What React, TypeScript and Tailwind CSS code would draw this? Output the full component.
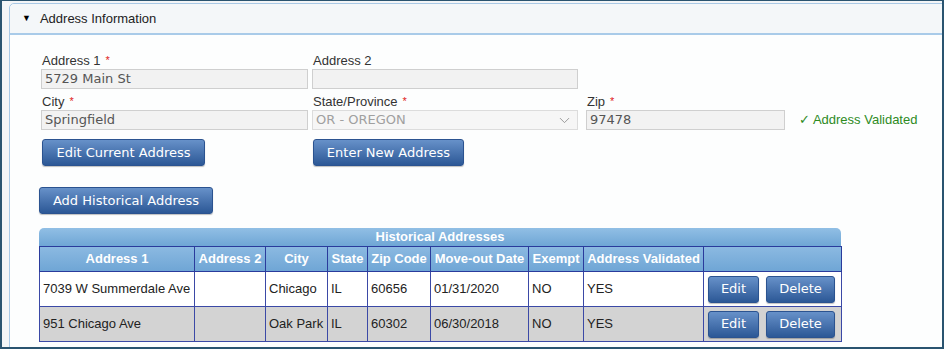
import { ChevronDown } from "lucide-react";

type HistRow = {
  address1: string;
  address2: string;
  city: string;
  state: string;
  zip: string;
  moveOut: string;
  exempt: string;
  validated: string;
};

const rows: HistRow[] = [
  { address1: "7039 W Summerdale Ave", address2: "", city: "Chicago", state: "IL", zip: "60656", moveOut: "01/31/2020", exempt: "NO", validated: "YES" },
  { address1: "951 Chicago Ave", address2: "", city: "Oak Park", state: "IL", zip: "60302", moveOut: "06/30/2018", exempt: "NO", validated: "YES" },
];

const columns = [
  { label: "Address 1", w: 155 },
  { label: "Address 2", w: 71 },
  { label: "City", w: 62 },
  { label: "State", w: 40 },
  { label: "Zip Code", w: 63 },
  { label: "Move-out Date", w: 98 },
  { label: "Exempt", w: 55 },
  { label: "Address Validated", w: 120 },
  { label: "", w: 138 },
];

const btn =
  "h-[27px] rounded-[3px] border border-[#2b5390] bg-gradient-to-b from-[#6791c9] to-[#2c5896] text-white text-[13px] font-['DejaVu_Sans',sans-serif] shadow-[0_1px_1px_rgba(0,0,0,0.25)]";

function Label({ text, required }: { text: string; required?: boolean }) {
  return (
    <div className="h-[17px] text-[13px] leading-[17px] text-[#333] pl-[1px]">
      {text}
      {required && <span className="text-[#e0201b] text-[11px] align-top ml-[5px]">*</span>}
    </div>
  );
}

function Input({ value, width, muted }: { value: string; width: number; muted?: boolean }) {
  return (
    <div
      className={`h-[20px] border border-[#cfcfcf] bg-[#f2f2f2] px-[3px] text-[13px] leading-[18px] font-['DejaVu_Sans',sans-serif] ${
        muted ? "text-[#9a9a9a]" : "text-[#555]"
      }`}
      style={{ width }}
    >
      {value}
    </div>
  );
}

export default function App() {
  return (
    <div className="w-[944px] h-[349px] overflow-hidden border-x-2 border-b-2 border-t border-[#2a5470] bg-[#f3f5f7] pt-[2px] pl-[7px] font-['Liberation_Sans',Arial,sans-serif]">
      <div className="w-[960px] h-[400px] border border-[#a9c9e6] rounded-tl-[5px] bg-[#fdfefe]">
        <div className="h-[31px] flex items-center pl-[12px] bg-[#f4f7f9] border-b-2 border-[#a9cbe9] rounded-tl-[5px]">
          <span className="text-[9px] text-black mr-[9px]">▼</span>
          <span className="text-[13px] text-[#222]">Address Information</span>
        </div>

        <div className="pt-[17px] pl-[31px]">
          <div className="flex">
            <div className="w-[271px]">
              <Label text="Address 1" required />
              <Input value="5729 Main St" width={267} />
            </div>
            <div className="w-[274px]">
              <Label text="Address 2" />
              <Input value="" width={266} />
            </div>
          </div>

          <div className="flex mt-[4px]">
            <div className="w-[271px]">
              <Label text="City" required />
              <Input value="Springfield" width={267} />
            </div>
            <div className="w-[274px]">
              <Label text="State/Province" required />
              <div className="h-[20px] w-[266px] border border-[#dcdcdc] bg-[#f6f6f6] px-[3px] flex items-center justify-between text-[13px] text-[#a0a0a0] font-['DejaVu_Sans',sans-serif]">
                <span>OR - OREGON</span>
                <ChevronDown size={17} strokeWidth={1.2} className="text-[#8a8a8a] mr-[1px]" />
              </div>
            </div>
            <div>
              <Label text="Zip" required />
              <div className="flex items-center">
                <Input value="97478" width={199} />
                <span className="ml-[14px] text-[13px] text-[#2e8b1f]">✓ Address Validated</span>
              </div>
            </div>
          </div>

          <div className="flex mt-[9px] ml-[1px]">
            <button className={`${btn} w-[163px]`}>Edit Current Address</button>
            <button className={`${btn} w-[151px] ml-[108px]`}>Enter New Address</button>
          </div>

          <button className={`${btn} w-[174px] h-[26px] mt-[21px] -ml-[2px] block`}>Add Historical Address</button>

          <div className="mt-[14px] -ml-[2px] w-[802px]">
            <div className="h-[18px] rounded-t-[5px] bg-gradient-to-b from-[#91bfe5] to-[#6fa6d5] text-center text-white font-bold text-[13px] leading-[18px]">
              Historical Addresses
            </div>
            <table className="w-[802px] table-fixed border-collapse text-[13px]">
              <colgroup>
                {columns.map((c, i) => (
                  <col key={i} style={{ width: c.w }} />
                ))}
              </colgroup>
              <thead>
                <tr className="h-[25px] bg-gradient-to-b from-[#8bb9e1] to-[#6ea5d5]">
                  {columns.map((c, i) => (
                    <th key={i} className="border border-[#2a3b9c] text-white font-bold text-[13px] text-center p-0 whitespace-nowrap">
                      {c.label}
                    </th>
                  ))}
                </tr>
              </thead>
              <tbody>
                {rows.map((r, i) => (
                  <tr key={i} className={`h-[35px] ${i % 2 ? "bg-[#d3d3d3]" : "bg-white"} text-[#222]`}>
                    {[r.address1, r.address2, r.city, r.state, r.zip, r.moveOut, r.exempt, r.validated].map((v, j) => (
                      <td key={j} className="border border-[#3b49a6] px-[3px] whitespace-nowrap">
                        {v}
                      </td>
                    ))}
                    <td className="border border-[#3b49a6] px-[4px]">
                      <div className="flex gap-[7px]">
                        <button className={`${btn} w-[51px] h-[26px]`}>Edit</button>
                        <button className={`${btn} w-[69px] h-[26px]`}>Delete</button>
                      </div>
                    </td>
                  </tr>
                ))}
              </tbody>
            </table>
          </div>
        </div>
      </div>
    </div>
  );
}
